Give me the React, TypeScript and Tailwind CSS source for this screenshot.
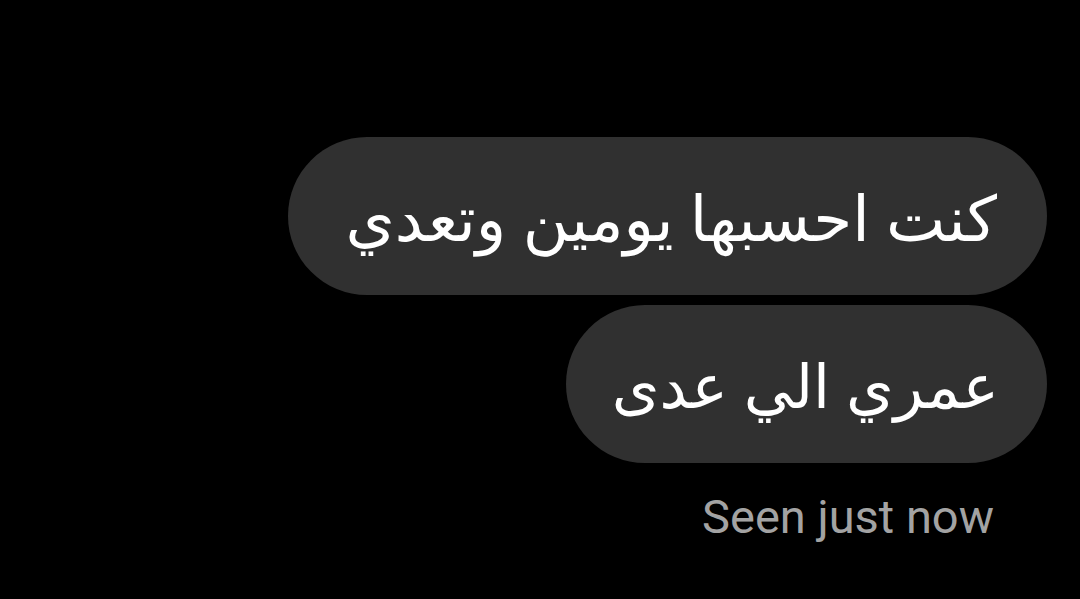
import React from "react";

export default function App() {
  return (
    <div className="w-[1080px] h-[599px] bg-black overflow-hidden flex flex-col items-end pt-[137px] pr-[33px]" style={{ fontFamily: '"Noto Sans", "DejaVu Sans", sans-serif' }}>
      <div dir="rtl" className="h-[158px] w-[759px] rounded-full bg-[#303030] flex items-center pr-[50px] text-white text-[63px] leading-none">
        كنت احسبها يومين وتعدي
      </div>
      <div dir="rtl" className="mt-[10px] h-[158px] w-[481px] rounded-full bg-[#303030] flex items-center pr-[48px] text-white text-[61px] leading-none">
        عمري الي عدى
      </div>
      <div className="mt-[30px] mr-[53px] text-[#a3a3a3] text-[47px] leading-none" style={{ fontFamily: 'Roboto, "Liberation Sans", sans-serif' }}>
        Seen just now
      </div>
    </div>
  );
}
